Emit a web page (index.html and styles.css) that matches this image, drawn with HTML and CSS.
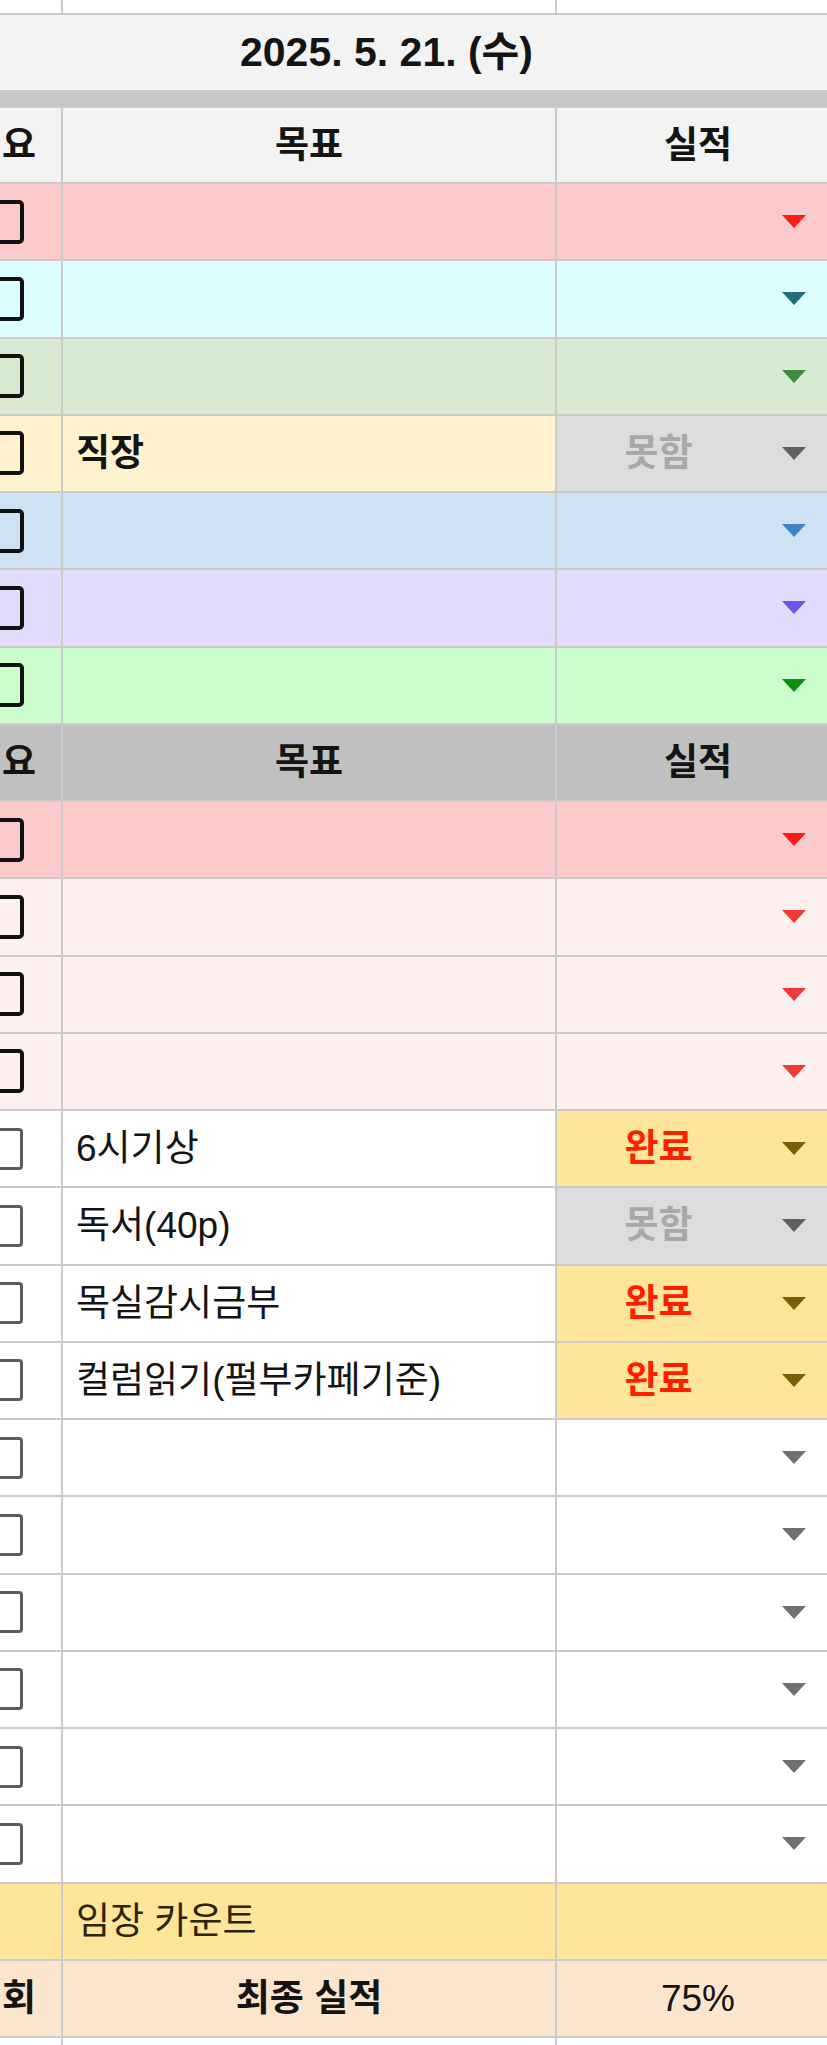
FILE: index.html
```html
<!DOCTYPE html>
<html lang="ko">
<head>
<meta charset="utf-8">
<title>체크리스트</title>
<link rel="stylesheet" href="styles.css">
</head>
<body>
<div class="sheet">
  <div class="row plain"><div class="c"></div><div class="c"></div><div class="c"></div></div>
  <div class="date">2025. 5. 21. (수)</div>
  <div class="band"></div>
  <div class="row head"><div class="c hd side">요</div><div class="c hd">목표</div><div class="c hd">실적</div></div>

  <div class="row bg-red a-red"><div class="c chk"><span class="box"></span></div><div class="c goal"></div><div class="c res"><span class="val"></span><span class="arr"></span></div></div>
  <div class="row bg-cyan a-teal"><div class="c chk"><span class="box"></span></div><div class="c goal"></div><div class="c res"><span class="val"></span><span class="arr"></span></div></div>
  <div class="row bg-sage a-green"><div class="c chk"><span class="box"></span></div><div class="c goal"></div><div class="c res"><span class="val"></span><span class="arr"></span></div></div>
  <div class="row bg-cream"><div class="c chk"><span class="box"></span></div><div class="c goal strong">직장</div><div class="c res miss"><span class="val">못함</span><span class="arr"></span></div></div>
  <div class="row bg-blue a-blue"><div class="c chk"><span class="box"></span></div><div class="c goal"></div><div class="c res"><span class="val"></span><span class="arr"></span></div></div>
  <div class="row bg-lav a-purple"><div class="c chk"><span class="box"></span></div><div class="c goal"></div><div class="c res"><span class="val"></span><span class="arr"></span></div></div>
  <div class="row bg-mint a-dgreen"><div class="c chk"><span class="box"></span></div><div class="c goal"></div><div class="c res"><span class="val"></span><span class="arr"></span></div></div>

  <div class="row head dark"><div class="c hd side">요</div><div class="c hd">목표</div><div class="c hd">실적</div></div>

  <div class="row bg-red a-red"><div class="c chk"><span class="box"></span></div><div class="c goal"></div><div class="c res"><span class="val"></span><span class="arr"></span></div></div>
  <div class="row bg-blush a-rose"><div class="c chk"><span class="box"></span></div><div class="c goal"></div><div class="c res"><span class="val"></span><span class="arr"></span></div></div>
  <div class="row bg-blush a-rose"><div class="c chk"><span class="box"></span></div><div class="c goal"></div><div class="c res"><span class="val"></span><span class="arr"></span></div></div>
  <div class="row bg-blush a-rose"><div class="c chk"><span class="box"></span></div><div class="c goal"></div><div class="c res"><span class="val"></span><span class="arr"></span></div></div>

  <div class="row plain"><div class="c chk"><span class="box light"></span></div><div class="c goal">6시기상</div><div class="c res done"><span class="val">완료</span><span class="arr"></span></div></div>
  <div class="row plain"><div class="c chk"><span class="box light"></span></div><div class="c goal">독서(40p)</div><div class="c res miss"><span class="val">못함</span><span class="arr"></span></div></div>
  <div class="row plain"><div class="c chk"><span class="box light"></span></div><div class="c goal">목실감시금부</div><div class="c res done"><span class="val">완료</span><span class="arr"></span></div></div>
  <div class="row plain"><div class="c chk"><span class="box light"></span></div><div class="c goal">컬럼읽기(펄부카페기준)</div><div class="c res done"><span class="val">완료</span><span class="arr"></span></div></div>

  <div class="row plain"><div class="c chk"><span class="box light"></span></div><div class="c goal"></div><div class="c res"><span class="val"></span><span class="arr"></span></div></div>
  <div class="row plain"><div class="c chk"><span class="box light"></span></div><div class="c goal"></div><div class="c res"><span class="val"></span><span class="arr"></span></div></div>
  <div class="row plain"><div class="c chk"><span class="box light"></span></div><div class="c goal"></div><div class="c res"><span class="val"></span><span class="arr"></span></div></div>
  <div class="row plain"><div class="c chk"><span class="box light"></span></div><div class="c goal"></div><div class="c res"><span class="val"></span><span class="arr"></span></div></div>
  <div class="row plain"><div class="c chk"><span class="box light"></span></div><div class="c goal"></div><div class="c res"><span class="val"></span><span class="arr"></span></div></div>
  <div class="row plain"><div class="c chk"><span class="box light"></span></div><div class="c goal"></div><div class="c res"><span class="val"></span><span class="arr"></span></div></div>

  <div class="row bg-gold"><div class="c"></div><div class="c goal olive">임장 카운트</div><div class="c"></div></div>
  <div class="row bg-peach"><div class="c hd side">회</div><div class="c hd">최종 실적</div><div class="c ctr">75%</div></div>
  <div class="row plain"><div class="c"></div><div class="c"></div><div class="c"></div></div>
</div>
</body>
</html>
```

FILE: styles.css
```css
html, body {
  margin: 0;
  padding: 0;
  background: #ffffff;
}

body {
  width: 827px;
  height: 2045px;
  overflow: hidden;
}

.sheet {
  display: grid;
  grid-template-columns: 127px 492px 282px;
  grid-template-rows: 13px 75px 14px 74px;
  grid-auto-rows: 75.25px;
  column-gap: 2px;
  row-gap: 2px;
  width: 905px;
  margin-left: -66px;
  background: #cbcbcb;
  font-family: "Liberation Sans", "Noto Sans CJK KR", sans-serif;
  font-size: 37px;
  line-height: 1;
  color: #141414;
}

.row {
  display: contents;
}

.c {
  display: flex;
  align-items: center;
  min-width: 0;
  overflow: hidden;
  white-space: nowrap;
  background: #ffffff;
}

.date {
  grid-column: 1 / -1;
  display: flex;
  align-items: center;
  justify-content: center;
  background: #f3f3f3;
  font-weight: 700;
  font-size: 41px;
}

.band {
  grid-column: 1 / -1;
  background: #c6c6c6;
}

.head .c {
  background: #f3f3f3;
}

.head.dark .c {
  background: #c0c0c0;
}

.hd {
  justify-content: center;
  font-weight: 700;
}

.hd.side {
  justify-content: flex-end;
  padding-right: 25px;
}

.ctr {
  justify-content: center;
}

.chk {
  justify-content: flex-end;
  padding-right: 37px;
}

.box {
  box-sizing: border-box;
  width: 44px;
  height: 44px;
  border: 4px solid #111111;
  border-radius: 5px;
}

.box.light {
  width: 42px;
  height: 42px;
  border: 3px solid #5c5c5c;
  border-radius: 4px;
  margin-right: 1px;
}

.goal {
  padding-left: 13px;
}

.strong {
  font-weight: 700;
}

.olive {
  color: #2a2608;
}

.res {
  padding-right: 33px;
}

.val {
  flex: 1;
  text-align: center;
  margin-right: 22px;
  font-weight: 700;
}

.arr {
  width: 0;
  height: 0;
  border-left: 12px solid transparent;
  border-right: 12px solid transparent;
  border-top: 13px solid #707070;
}

/* row colours */
.bg-red .c { background: #fccaca; }
.bg-cyan .c { background: #dcfefe; }
.bg-sage .c { background: #d9ead3; }
.bg-cream .c { background: #fff2cc; }
.bg-blue .c { background: #cfe2f3; }
.bg-lav .c { background: #e3dcfd; }
.bg-mint .c { background: #ccfdcc; }
.bg-blush .c { background: #fff0f0; }
.bg-gold .c { background: #ffe599; }
.bg-peach .c { background: #fce5cd; }

/* arrow colours */
.a-red .arr { border-top-color: #ff1a1a; }
.a-teal .arr { border-top-color: #1f6f7c; }
.a-green .arr { border-top-color: #3f8a3f; }
.a-blue .arr { border-top-color: #3d85c6; }
.a-purple .arr { border-top-color: #6f52f2; }
.a-dgreen .arr { border-top-color: #148c14; }
.a-rose .arr { border-top-color: #f03a3a; }

/* dropdown chip states */
.c.res.miss {
  background: #dcdcdc;
}
.miss .val {
  color: #a8a8a8;
}
.miss .arr {
  border-top-color: #606060;
}

.c.res.done {
  background: #ffe599;
}
.done .val {
  color: #ff1f00;
}
.done .arr {
  border-top-color: #7a5f08;
}
```
